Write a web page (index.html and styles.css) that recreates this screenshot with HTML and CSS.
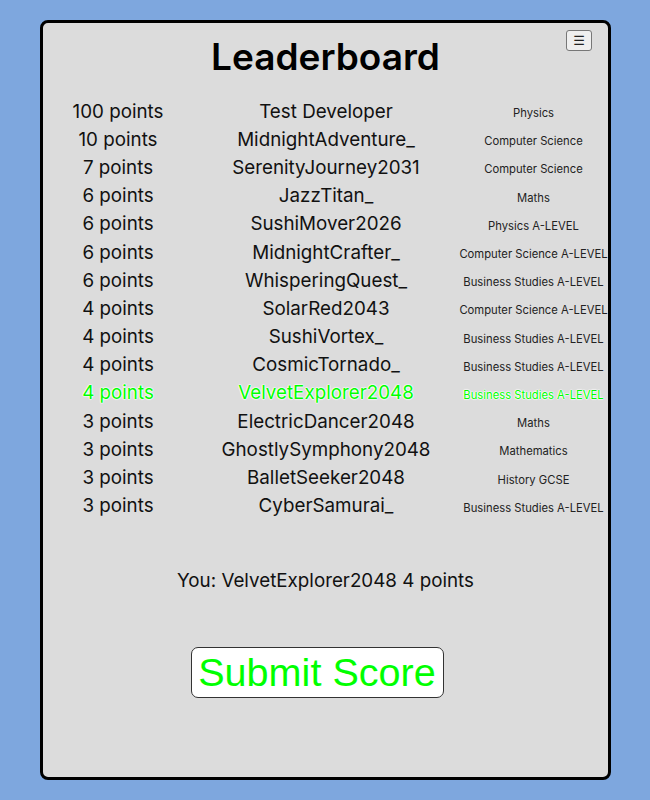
FILE: index.html
```html
<!DOCTYPE html>
<html>
<head>
<meta charset="utf-8">
<link rel="stylesheet" href="styles.css">
</head>
<body>
<div class="card">
  <button class="menu">☰</button>
  <h1 class="title">Leaderboard</h1>
  <div class="board">
    <div class="row"><span class="pts">100 points</span><span class="name">Test Developer</span><span class="subj">Physics</span></div>
    <div class="row"><span class="pts">10 points</span><span class="name">MidnightAdventure_</span><span class="subj">Computer Science</span></div>
    <div class="row"><span class="pts">7 points</span><span class="name">SerenityJourney2031</span><span class="subj">Computer Science</span></div>
    <div class="row"><span class="pts">6 points</span><span class="name">JazzTitan_</span><span class="subj">Maths</span></div>
    <div class="row"><span class="pts">6 points</span><span class="name">SushiMover2026</span><span class="subj">Physics A-LEVEL</span></div>
    <div class="row"><span class="pts">6 points</span><span class="name">MidnightCrafter_</span><span class="subj">Computer Science A-LEVEL</span></div>
    <div class="row"><span class="pts">6 points</span><span class="name">WhisperingQuest_</span><span class="subj">Business Studies A-LEVEL</span></div>
    <div class="row"><span class="pts">4 points</span><span class="name">SolarRed2043</span><span class="subj">Computer Science A-LEVEL</span></div>
    <div class="row"><span class="pts">4 points</span><span class="name">SushiVortex_</span><span class="subj">Business Studies A-LEVEL</span></div>
    <div class="row"><span class="pts">4 points</span><span class="name">CosmicTornado_</span><span class="subj">Business Studies A-LEVEL</span></div>
    <div class="row me"><span class="pts">4 points</span><span class="name">VelvetExplorer2048</span><span class="subj">Business Studies A-LEVEL</span></div>
    <div class="row"><span class="pts">3 points</span><span class="name">ElectricDancer2048</span><span class="subj">Maths</span></div>
    <div class="row"><span class="pts">3 points</span><span class="name">GhostlySymphony2048</span><span class="subj">Mathematics</span></div>
    <div class="row"><span class="pts">3 points</span><span class="name">BalletSeeker2048</span><span class="subj">History GCSE</span></div>
    <div class="row"><span class="pts">3 points</span><span class="name">CyberSamurai_</span><span class="subj">Business Studies A-LEVEL</span></div>
  </div>
  <p class="you">You: VelvetExplorer2048 4 points</p>
  <div class="actions"><button class="submit">Submit Score</button></div>
</div>
</body>
</html>
```
FILE: styles.css
```css
html, body {
  margin: 0;
  padding: 0;
}
body {
  background: #7ea7de;
  font-family: Inter, "Noto Sans", sans-serif;
  color: #111;
  padding: 20px 0;
}
.card {
  position: relative;
  box-sizing: border-box;
  width: 571px;
  height: 760px;
  margin: 0 auto 0 40px;
  background: #dcdcdc;
  border: 3px solid #000;
  border-radius: 8px;
  display: flex;
  flex-direction: column;
}
.menu {
  position: absolute;
  top: 7px;
  right: 16px;
  width: 26px;
  height: 21px;
  padding: 0;
  border: 1px solid #777;
  border-radius: 3px;
  background: #efefef;
  font-size: 13px;
  line-height: 19px;
  color: #222;
  font-family: "DejaVu Sans", sans-serif;
}
.title {
  margin: 13px 0 0;
  text-align: center;
  font-size: 37px;
  font-weight: 600;
  line-height: 42px;
  color: #000;
}
.board {
  margin-top: 19px;
  display: flex;
  flex-direction: column;
}
.row {
  display: grid;
  grid-template-columns: 150px 266px 149px;
  height: 28.2px;
  align-items: center;
  font-size: 18.8px;
}
.row span {
  text-align: center;
  white-space: nowrap;
}
.row .subj {
  font-size: 11.25px;
  color: #222;
  padding-top: 4px;
}
.row.me {
  color: #00ff00;
  text-shadow: 0 0 1px #fff, 0 0 1px #fff, 0 0 1.5px #fff, 0 0 2px #fff, 0 0 2px #fff;
}
.row.me .subj {
  color: #00ff00;
}
.you {
  margin: 47px 0 0;
  text-align: center;
  font-size: 18.8px;
  line-height: 28px;
}
.actions {
  display: flex;
  justify-content: center;
  margin-top: 52px;
}
.submit {
  width: 253px;
  height: 51px;
  margin-right: 17px;
  padding: 0;
  background: #fff;
  border: 1px solid #333;
  border-radius: 7px;
  color: #00ff00;
  font-family: "Liberation Sans", Arial, sans-serif;
  font-size: 39.6px;
  line-height: 49px;
}
```
